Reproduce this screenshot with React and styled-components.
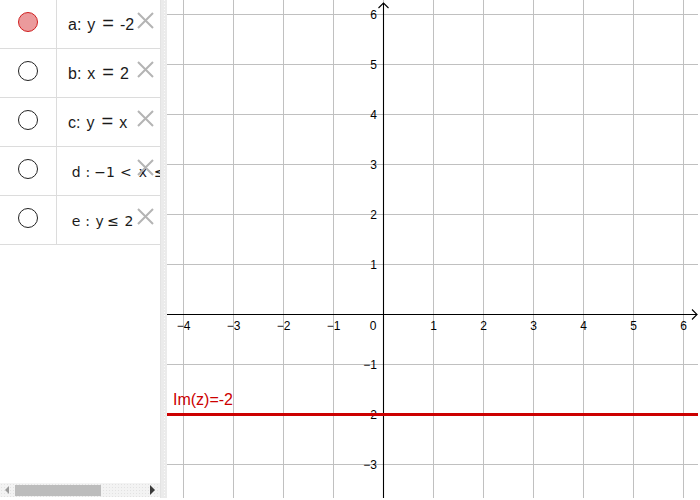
import React from 'react';
import styled, { createGlobalStyle } from 'styled-components';

const Global = createGlobalStyle`
  html, body { margin: 0; padding: 0; background: #fff; }
  body {
    width: 700px; height: 500px; overflow: hidden;
    font-family: "Liberation Sans", Arial, sans-serif;
  }
`;

const Page = styled.div`
  display: flex;
  width: 700px;
  height: 498px;
`;

const AlgebraPanel = styled.div`
  width: 160px;
  flex: none;
  height: 100%;
  display: flex;
  flex-direction: column;
  overflow: hidden;
`;

const Rows = styled.div`
  flex: 1;
  overflow: hidden;
`;

const Row = styled.div`
  position: relative;
  display: flex;
  height: 48px;
  border-bottom: 1px solid #dcdcdc;
`;

const MarkerCell = styled.div`
  width: 57px;
  flex: none;
  box-sizing: border-box;
  border-right: 1px solid #dcdcdc;
  display: flex;
  justify-content: center;
  padding-top: 12px;
`;

const Marker = styled.div`
  width: 20px;
  height: 20px;
  box-sizing: border-box;
  border-radius: 50%;
  border: ${p => (p.$on ? '1px solid #d02020' : '1.4px solid #222')};
  background: ${p => (p.$on ? '#eb9a9c' : '#fff')};
`;

const Content = styled.div`
  flex: 1;
  min-width: 0;
  overflow: hidden;
  white-space: nowrap;
  padding-left: 11px;
  padding-top: 15px;
  font-size: 16px;
  line-height: 20px;
  color: #1a1a1a;
`;

const MathContent = styled(Content)`
  padding-left: 14.7px;
  font-family: "DejaVu Sans", "Liberation Sans", sans-serif;
  font-size: 14px;
`;

const Var = styled.span`
  margin-left: 6px;
`;

const Op = styled.span`
  font-size: 20px;
  line-height: 0;
  margin: 0 6px 0 7px;
`;

const Tok = styled.span`
  display: inline-block;
  margin-left: ${p => p.$ml || 0}px;
`;

const Close = styled.svg`
  position: absolute;
  left: 137px;
  top: 12px;
  width: 17px;
  height: 17px;
`;

const HScroll = styled.div`
  flex: none;
  height: 14px;
  margin-bottom: 1px;
  display: flex;
  align-items: center;
  background-color: #f3f3f3;
  background-image: radial-gradient(#e2e2e2 0.8px, transparent 0.9px);
  background-size: 3px 3px;
`;

const ArrowLeft = styled.div`
  width: 0; height: 0;
  margin-left: 5px;
  border-top: 4.5px solid transparent;
  border-bottom: 4.5px solid transparent;
  border-right: 4px solid #9a9a9a;
`;

const ArrowRight = styled.div`
  width: 0; height: 0;
  margin-left: auto;
  margin-right: 5px;
  border-top: 5px solid transparent;
  border-bottom: 5px solid transparent;
  border-left: 5px solid #3a3a3a;
`;

const Thumb = styled.div`
  width: 86px;
  height: 11px;
  margin-left: 6px;
  background: #bcbcbc;
`;

const Splitter = styled.div`
  width: 7px;
  flex: none;
  height: 100%;
  background-color: #ebebeb;
  border-left: 1px solid #e3e3e3;
  box-sizing: border-box;
  background-image: linear-gradient(#fafafa 50%, transparent 50%);
  background-size: 1px 3px;
  background-repeat: repeat-y;
  background-position: 3px 0;
`;

const Graphics = styled.div`
  width: 531px;
  flex: none;
  height: 100%;
`;

const CloseIcon = () => (
  <Close viewBox="0 0 17 17">
    <path d="M1 1 L16 16 M16 1 L1 16" stroke="#b4b4b4" strokeWidth="2" fill="none" />
  </Close>
);

const OX = 216;
const OY = 314;
const U = 50;
const W = 531;
const H = 498;

const fmt = n => (n < 0 ? '\u2212' + Math.abs(n) : String(n));

function Plot() {
  const vx = [];
  for (let i = 0; i <= 10; i++) vx.push(16 + U * i);
  const hy = [];
  for (let j = 0; j <= 9; j++) hy.push(14 + U * j);
  const xs = [];
  for (let k = -4; k <= 6; k++) if (k !== 0) xs.push(k);
  const ys = [];
  for (let k = -3; k <= 6; k++) if (k !== 0) ys.push(k);
  return (
    <svg width={W} height={H} viewBox={`0 0 ${W} ${H}`} style={{ display: 'block' }}>
      <g stroke="#c0c0c0" strokeWidth="1">
        {vx.map(x => <line key={'v' + x} x1={x + 0.5} y1={0} x2={x + 0.5} y2={H} />)}
        {hy.map(y => <line key={'h' + y} x1={0} y1={y + 0.5} x2={W} y2={y + 0.5} />)}
      </g>
      <g stroke="#000" strokeWidth="1.1" fill="none">
        <line x1={0} y1={OY + 0.5} x2={W - 1} y2={OY + 0.5} />
        <line x1={OX + 0.5} y1={3} x2={OX + 0.5} y2={H} />
        <polyline points={`${W - 6},${OY - 4.5} ${W - 1},${OY + 0.5} ${W - 6},${OY + 5.5}`} />
        <polyline points={`${OX - 4.5},8 ${OX + 0.5},3 ${OX + 5.5},8`} />
      </g>
      <g fontFamily='"Liberation Sans", Arial, sans-serif' fontSize="12" fill="#000">
        {xs.map(k => (
          <text key={'x' + k} x={OX + U * k + 0.5} y={330} textAnchor="middle">{fmt(k)}</text>
        ))}
        <text x={206} y={330} textAnchor="middle">0</text>
        {ys.map(k => (
          <text key={'y' + k} x={210} y={OY - U * k + 4.5} textAnchor="end">{fmt(k)}</text>
        ))}
      </g>
      <line x1={0} y1={414.5} x2={W} y2={414.5} stroke="#cc0000" strokeWidth="3" />
      <text x={6} y={405} fontFamily='"Liberation Sans", Arial, sans-serif' fontSize="16" fill="#cc0000">Im(z)=-2</text>
    </svg>
  );
}

export default function App() {
  return (
    <>
      <Global />
      <Page>
        <AlgebraPanel>
          <Rows>
            <Row>
              <MarkerCell><Marker $on /></MarkerCell>
              <Content>a:<Var>y</Var><Op>=</Op>-2</Content>
              <CloseIcon />
            </Row>
            <Row>
              <MarkerCell><Marker /></MarkerCell>
              <Content>b:<Var>x</Var><Op>=</Op>2</Content>
              <CloseIcon />
            </Row>
            <Row>
              <MarkerCell><Marker /></MarkerCell>
              <Content>c:<Var>y</Var><Op>=</Op>x</Content>
              <CloseIcon />
            </Row>
            <Row>
              <MarkerCell><Marker /></MarkerCell>
              <MathContent>
                <Tok>d</Tok>
                <Tok $ml={5}>:</Tok>
                <Tok $ml={4}>{'\u2212'}</Tok>
                <Tok>1</Tok>
                <Tok $ml={5}>&lt;</Tok>
                <Tok $ml={7}>x</Tok>
                <Tok $ml={7}>≤</Tok>
                <Tok $ml={5}>3</Tok>
              </MathContent>
              <CloseIcon />
            </Row>
            <Row>
              <MarkerCell><Marker /></MarkerCell>
              <MathContent>
                <Tok>e</Tok>
                <Tok $ml={5}>:</Tok>
                <Tok $ml={5.5}>y</Tok>
                <Tok $ml={3.5}>≤</Tok>
                <Tok $ml={5.5}>2</Tok>
              </MathContent>
              <CloseIcon />
            </Row>
          </Rows>
          <HScroll>
            <ArrowLeft />
            <Thumb />
            <ArrowRight />
          </HScroll>
        </AlgebraPanel>
        <Splitter />
        <Graphics>
          <Plot />
        </Graphics>
      </Page>
    </>
  );
}
